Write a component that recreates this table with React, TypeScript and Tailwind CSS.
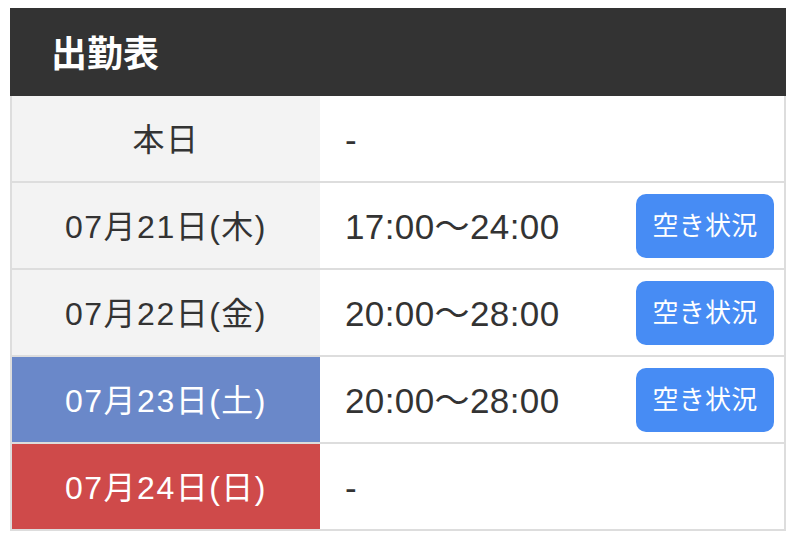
const rows = [
  { date: "本日", time: "-", tone: "plain", button: false },
  { date: "07月21日(木)", time: "17:00～24:00", tone: "plain", button: true },
  { date: "07月22日(金)", time: "20:00～28:00", tone: "plain", button: true },
  { date: "07月23日(土)", time: "20:00～28:00", tone: "sat", button: true },
  { date: "07月24日(日)", time: "-", tone: "sun", button: false },
];

const toneClass: Record<string, string> = {
  plain: "bg-[#f3f3f3] text-[#333333]",
  sat: "bg-[#6a88c9] text-white",
  sun: "bg-[#cf4a4a] text-white",
};

export default function App() {
  return (
    <div
      className="h-[534px] w-[800px] overflow-hidden bg-white pl-[10px] pt-[8px]"
      style={{ fontFamily: '"Liberation Sans", "Noto Sans CJK JP", sans-serif' }}
    >
      <div className="w-[776px] border-x-2 border-[#dddddd]">
        <div className="-mx-[2px] flex h-[88px] items-center bg-[#333333] pl-[41px] pt-[6px]">
          <h2 className="text-[36px] font-bold text-white">出勤表</h2>
        </div>
        {rows.map((row) => (
          <div key={row.date} className="flex h-[87px] border-b-2 border-[#dddddd]">
            <div
              className={`flex w-[308px] shrink-0 items-center justify-center pt-[3px] text-[32px] tracking-[1.5px] ${toneClass[row.tone]}`}
            >
              {row.date}
            </div>
            <div className="flex flex-1 items-center justify-between pl-[25px] pr-[10px] pt-[1px]">
              <span className="pt-[3px] text-[35px] tracking-[0.4px] text-[#333333]">{row.time}</span>
              {row.button ? (
                <button className="h-[64px] w-[138px] rounded-[10px] bg-[#478cf4] pt-[1px] text-[26px] tracking-[0.3px] text-white">
                  空き状況
                </button>
              ) : null}
            </div>
          </div>
        ))}
      </div>
    </div>
  );
}
